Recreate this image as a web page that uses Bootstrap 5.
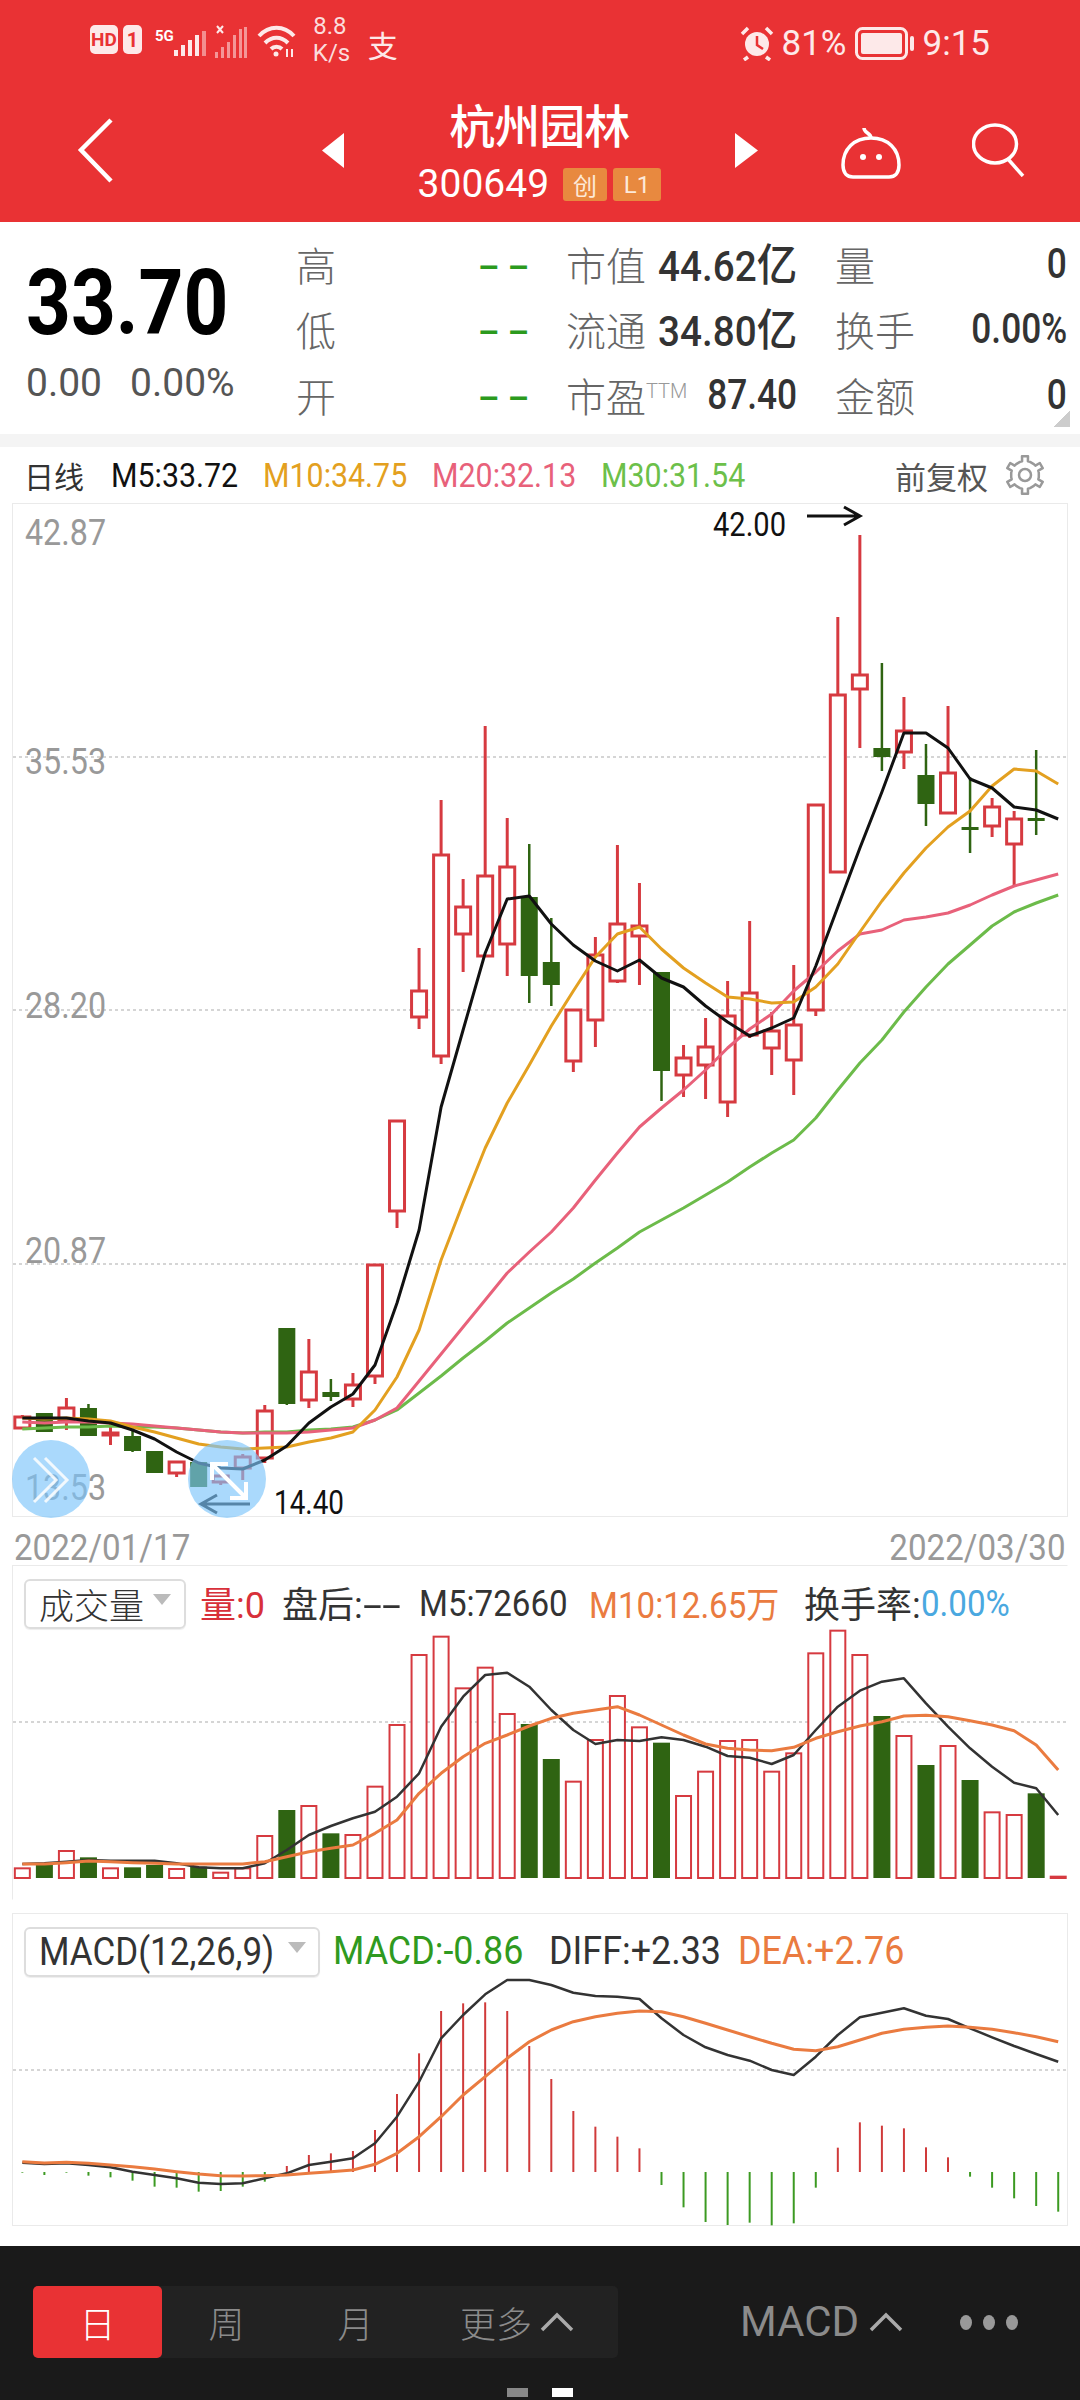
<!DOCTYPE html>
<html lang="zh">
<head>
<meta charset="UTF-8" />
<title>杭州园林</title>
<link href="https://cdn.jsdelivr.net/npm/bootstrap@5.3.3/dist/css/bootstrap.min.css" rel="stylesheet"/>
<style>
  html, body { margin: 0; background: #fff; }
  body {
    width: 1080px; height: 2400px; overflow: hidden; position: relative;
    font-family: Roboto, "Noto Sans CJK SC", sans-serif;
    color: #333; line-height: 1;
  }
  .cjk { font-family: "Noto Sans CJK SC", sans-serif; }
  /* the app's digits are a condensed face, so squeeze Roboto to match */
  .sq { display: inline-block; white-space: nowrap; transform: scaleX(.92); transform-origin: left center; }
  .sq-r { transform-origin: right center; }

  .top-red { background: #e93234; height: 222px; color: #fff; }
  .status-row { height: 84px; padding: 21px 90px 0 90px; }
  .st-hd { width: 28px; height: 29px; background: #fde9e9; color: #e93234; border-radius: 5px; font-size: 19px; font-weight: 700; }
  .st-one { width: 19px; height: 29px; background: #fde9e9; color: #e93234; border-radius: 5px; font-size: 20px; font-weight: 700; margin-left: 5px; }
  .st-5g { font-size: 15px; font-weight: 700; margin: -17px 0 0 13px; }
  .st-speed { font-size: 24px; line-height: 27px; width: 34px; margin: -8px 0 0 16px; text-align: center; color: #fbdcdc; }
  .st-pay { font-size: 30px; margin: -2px 0 0 21px; color: #fde9e9; }
  .st-txt { font-size: 35px; color: #fde9e9; }
  .tool-row { height: 138px; padding: 0 54px 0 77px; position: relative; }
  .title-box { width: 250px; }
  .stock-name { font-size: 46px; font-weight: 500; letter-spacing: -1px; margin-top: 16px; }
  .stock-code { font-size: 39px; margin-top: 19px; gap: 6px; }
  .tag-box { background: #e8893f; color: #fde9d8; border-radius: 3px; height: 33px; font-size: 24px; }
  .tag-a { width: 44px; }
  .tag-b { width: 48px; }
  .nav-back { margin-top: 33px; }
  .nav-prev { margin: 49px 0 0 205px; }
  .nav-next { margin: 49px 82px 0 0; }
  .nav-bot { margin-top: 41px; }
  .nav-find { margin-top: 39px; }

  .quote-box { height: 212px; }
  .price-col { width: 296px; padding: 46px 0 0 26px; }
  .big-price { font-size: 91px; font-weight: 700; color: #000; height: 70px; line-height: 70px; transform: scaleX(.86); }
  .sub-price { font-size: 39px; color: #555; margin-top: 26px; gap: 28px; }
  .quote-grid { display: grid; grid-template-columns: 181px 89px 231px 38px 232px; grid-auto-rows: 65.5px; padding-top: 9px; font-size: 40px; align-items: center; }
  .q-lab { color: #666; font-family: "Noto Sans CJK SC", sans-serif; font-weight: 300; white-space: nowrap; }
  .q-dash { color: #2b9a1d; font-weight: 700; letter-spacing: 3px; font-size: 32px; display: inline-block; transform: scaleX(1.9); transform-origin: left center; }
  .q-val { color: #333; font-size: 42px; font-weight: 500; transform: scaleX(.84); margin-left: -50px; }
  .q-wide { transform: scaleX(.92); }
  .q-val .cjk { font-size: 44px; }
  .q-ttm { font-size: 20px; color: #999; vertical-align: 14px; font-family: Roboto, sans-serif; font-weight: 300; }
  .fold-mark { position: absolute; left: 1053px; top: 410px; width: 17px; height: 17px; background: linear-gradient(135deg, transparent 50%, #ccc 50%); }
  .grey-gap { height: 13px; background: #f4f4f4; }

  .ma-row { height: 56px; padding: 0 35px 0 24px; font-size: 33px; }
  .ma-day { font-size: 30px; width: 87px; }
  .c-ma5 { color: #111; width: 152px; }
  .c-ma10 { color: #e3a020; width: 169px; }
  .c-ma20 { color: #e8617a; width: 169px; }
  .c-ma30 { color: #6cc04a; }
  .fq-txt { color: #555; font-size: 31px; margin-right: 17px; }

  .plot-box { margin-left: 12px; width: 1056px; border: 1px solid #eaeaea; background: #fff; }
  .plot-box svg { display: block; overflow: visible; }
  .plot-main { height: 1014px; }
  .date-row { height: 48px; padding: 13px 14px 0 14px; color: #999; font-size: 36px; }
  .plot-vol { height: 335px; border-bottom-color: #fff; border-right-color: #fff; }
  .plot-macd { height: 313px; }
  .plot-spacer { height: 13px; }
  .legend-row { height: 64px; padding: 11px 0 0 11px; font-size: 36px; }
  .legend-macd { font-size: 39px; }
  .sel-box { border: 2px solid #ddd; border-radius: 6px; height: 50px; padding-left: 13px; color: #333; box-shadow: 0 1px 1px #eee; }
  .sel-vol { width: 162px; font-size: 35px; margin-right: 14px; }
  .sel-macd { width: 296px; font-size: 38px; margin-right: 13px; }
  .sel-caret { width: 0; height: 0; border: 9px solid transparent; border-top: 11px solid #bbb; border-bottom: 0; margin-left: 9px; margin-top: -8px; }
  .sel-macd .sel-caret { margin-left: -7px; }
  .c-red { color: #d8303a; }
  .c-org { color: #ea7b40; }
  .c-blue { color: #4aa8e0; }
  .c-grn { color: #2f9a20; }
  .dash-wide { display: inline-block; transform: scaleX(1.9); transform-origin: left center; }
  .w-82 { width: 82px; }
  .w-137 { width: 137px; }
  .w-170 { width: 170px; }
  .w-215 { width: 215px; }
  .w-216 { width: 216px; }
  .w-189 { width: 189px; }

  .gap-white { height: 20px; }
  .bottom-dark { background: #1a1a1a; height: 154px; padding: 40px 0 0 33px; position: relative; color: #8b8b8b; }
  .seg-bar { width: 585px; height: 72px; background: #222; border-radius: 5px; font-size: 36px; font-weight: 300; }
  .seg-item { width: 129px; }
  .seg-on { background: #e93234; color: #fff; border-radius: 5px; }
  .seg-more { padding-left: 40px; }
  .macd-pick { font-size: 42px; margin-left: 122px; gap: 10px; height: 72px; }
  .dot-row { margin-left: 57px; gap: 11px; height: 72px; }
  .dot-one { width: 12px; height: 15px; border-radius: 50%; background: #999; }
  .pager { position: absolute; left: 507px; top: 142px; gap: 24px; }
  .pager i { display: block; width: 21px; height: 9px; background: #888; }
  .pager i + i { background: #fff; }

  .float-btn { position: absolute; top: 1440px; width: 78px; height: 78px; border-radius: 50%; background: rgba(125, 197, 250, .65); }
  .float-a { left: 12px; }
  .float-b { left: 188px; }
</style>
</head>
<body>

<div class="top-red">
  <div class="status-row d-flex align-items-start">
    <div class="st-hd d-flex align-items-center justify-content-center mt-1">HD</div>
    <div class="st-one d-flex align-items-center justify-content-center mt-1">1</div>
    <div class="st-5g mt-1 pt-1">5G</div>
    <svg width="33" height="30" class="mt-2" fill="#fde9e9"><rect x="0" y="21" width="4" height="6"/><rect x="7" y="16" width="4" height="11"/><rect x="14" y="11" width="4" height="16"/><rect x="21" y="6" width="4" height="21"/><rect x="28" y="2" width="4" height="25" opacity=".5"/></svg>
    <svg width="34" height="36" class="ms-2 mt-1" fill="#fde9e9"><path d="M2 1l6 7M8 1L2 8" stroke="#fde9e9" stroke-width="2"/><g opacity=".55"><rect x="0" y="27" width="3" height="6"/><rect x="6" y="22" width="3" height="11"/><rect x="12" y="17" width="3" height="16"/><rect x="18" y="10" width="3" height="23"/><rect x="24" y="4" width="3" height="29"/><rect x="29" y="2" width="3" height="31"/></g></svg>
    <svg width="40" height="34" class="ms-2 mt-1" fill="none" stroke="#fde9e9" stroke-width="4"><path d="M2 11C12 0 27 0 37 11M8 18c7-7 16-7 23 0M14 24c3-3 8-3 11 0"/><circle cx="19" cy="29" r="2.5" fill="#fde9e9" stroke="none"/><path d="M30 24v8M35 24v8" stroke-width="2"/></svg>
    <div class="st-speed">8.8 K/s</div>
    <div class="st-pay cjk mt-2">支</div>
    <div class="ms-auto d-flex align-items-center mt-1">
      <svg width="34" height="36" fill="none" stroke="#fde9e9"><circle cx="17" cy="19" r="12" fill="#fde9e9" stroke="none"/><path d="M17 11v9l6 4" stroke="#e93234" stroke-width="2.5"/><path d="M2 9l6-6M32 9l-6-6M8 32l-4 3M26 32l4 3" stroke-width="3.5"/></svg>
      <span class="st-txt ms-2">81%</span>
      <svg width="60" height="33" class="ms-2"><rect x="1.5" y="1.5" width="50" height="30" rx="6" fill="none" stroke="#fde9e9" stroke-width="3"/><rect x="6" y="6" width="41" height="21" rx="2" fill="#fde9e9"/><rect x="55" y="9" width="4" height="15" rx="2" fill="#fde9e9"/></svg>
      <span class="st-txt ms-2">9:15</span>
    </div>
  </div>
  <div class="tool-row d-flex align-items-start">
    <svg width="40" height="66" class="nav-back" fill="none" stroke="#fff" stroke-width="4.5"><path d="M34 3L4 33l30 31" stroke-linejoin="miter"/></svg>
    <svg width="22" height="35" class="nav-prev" fill="#fff"><path d="M22 0v35L0 17.500z"/></svg>
    <div class="title-box mx-auto text-center d-flex flex-column align-items-center">
      <div class="stock-name cjk">杭州园林</div>
      <div class="stock-code d-flex align-items-center">300649<span class="tag-box tag-a cjk d-flex align-items-center justify-content-center ms-2">创</span><span class="tag-box tag-b d-flex align-items-center justify-content-center">L1</span></div>
    </div>
    <svg width="23" height="35" class="nav-next" fill="#fff"><path d="M0 0v35L23 17.500z"/></svg>
    <svg width="62" height="56" class="nav-bot" fill="none" stroke="#fff" stroke-width="3.500"><path d="M31 13C31 8 24 8 24 3"/><path d="M3 40C3 24 14 13 31 13s28 11 28 27c0 8-4 12-10 12H13C7 52 3 48 3 40z"/><circle cx="23" cy="32" r="3" fill="#fff" stroke="none"/><circle cx="39" cy="32" r="3" fill="#fff" stroke="none"/></svg>
    <svg width="54" height="54" class="nav-find ms-auto" fill="none" stroke="#fff" stroke-width="3.500"><ellipse cx="23" cy="21" rx="21.500" ry="19"/><path d="M36 36l15 17"/></svg>
  </div>
</div>

<div class="quote-box d-flex">
  <div class="price-col">
    <div class="big-price sq">33.70</div>
    <div class="sub-price d-flex"><span>0.00</span><span>0.00%</span></div>
  </div>
  <div class="quote-grid">
    <div class="q-lab">高</div><div><span class="q-dash">--</span></div>
    <div class="d-flex justify-content-between align-items-center"><span class="q-lab">市值</span><span class="q-val q-wide sq sq-r">44.62<span class="cjk">亿</span></span></div><div></div>
    <div class="d-flex justify-content-between align-items-center"><span class="q-lab">量</span><span class="q-val sq sq-r">0</span></div>
    <div class="q-lab">低</div><div><span class="q-dash">--</span></div>
    <div class="d-flex justify-content-between align-items-center"><span class="q-lab">流通</span><span class="q-val q-wide sq sq-r">34.80<span class="cjk">亿</span></span></div><div></div>
    <div class="d-flex justify-content-between align-items-center"><span class="q-lab">换手</span><span class="q-val sq sq-r">0.00%</span></div>
    <div class="q-lab">开</div><div><span class="q-dash">--</span></div>
    <div class="d-flex justify-content-between align-items-center"><span class="q-lab">市盈<span class="q-ttm">TTM</span></span><span class="q-val sq sq-r">87.40</span></div><div></div>
    <div class="d-flex justify-content-between align-items-center"><span class="q-lab">金额</span><span class="q-val sq sq-r">0</span></div>
  </div>
</div>
<div class="fold-mark"></div>
<div class="grey-gap"></div>

<div class="ma-row d-flex align-items-center">
  <span class="cjk ma-day">日线</span>
  <span class="c-ma5"><span class="sq">M5:33.72</span></span>
  <span class="c-ma10"><span class="sq">M10:34.75</span></span>
  <span class="c-ma20"><span class="sq">M20:32.13</span></span>
  <span class="c-ma30"><span class="sq">M30:31.54</span></span>
  <span class="fq-txt cjk ms-auto">前复权</span>
  <svg width="40" height="40" id="gearIcon"></svg>
</div>

<div class="plot-box plot-main"><svg id="mainChart" width="1054" height="1012" viewBox="13 504 1054 1012"></svg></div>
<div class="date-row d-flex justify-content-between"><span class="sq">2022/01/17</span><span class="sq sq-r">2022/03/30</span></div>

<div class="plot-box plot-vol">
  <div class="legend-row d-flex align-items-center">
    <div class="sel-box sel-vol d-flex align-items-center"><span class="cjk fw-light">成交量</span><span class="sel-caret"></span></div>
    <span class="c-red w-82"><span class="cjk">量</span>:0</span>
    <span class="w-137"><span class="cjk">盘后</span>:<span class="dash-wide">--</span></span>
    <span class="w-170"><span class="sq">M5:72660</span></span>
    <span class="c-org w-215"><span class="sq">M10:12.65<span class="cjk">万</span></span></span>
    <span><span class="cjk">换手率</span>:</span><span class="c-blue sq">0.00%</span>
  </div>
  <svg id="volChart" width="1054" height="270" viewBox="13 1630 1054 270"></svg>
</div>

<div class="plot-spacer"></div>

<div class="plot-box plot-macd">
  <div class="legend-row legend-macd d-flex align-items-center">
    <div class="sel-box sel-macd d-flex align-items-center"><span class="sq">MACD(12,26,9)</span><span class="sel-caret"></span></div>
    <span class="c-grn w-216"><span class="sq">MACD:-0.86</span></span>
    <span class="w-189"><span class="sq">DIFF:+2.33</span></span>
    <span class="c-org"><span class="sq">DEA:+2.76</span></span>
  </div>
  <svg id="macdChart" width="1054" height="247" viewBox="13 1978 1054 247"></svg>
</div>

<div class="gap-white"></div>

<div class="bottom-dark d-flex align-items-start">
  <div class="seg-bar d-flex align-items-center cjk">
    <div class="seg-item seg-on h-100 d-flex align-items-center justify-content-center">日</div>
    <div class="seg-item text-center">周</div>
    <div class="seg-item text-center">月</div>
    <div class="seg-item seg-more d-flex align-items-center gap-2 text-nowrap">更多<svg width="34" height="20" fill="none" stroke="#aaa" stroke-width="3.500" class="flex-shrink-0"><path d="M2 18L17 3l15 15"/></svg></div>
  </div>
  <div class="macd-pick d-flex align-items-center">MACD<svg width="34" height="20" fill="none" stroke="#aaa" stroke-width="3.500"><path d="M2 18L17 3l15 15"/></svg></div>
  <div class="dot-row d-flex align-items-center"><span class="dot-one"></span><span class="dot-one"></span><span class="dot-one"></span></div>
  <div class="pager d-flex"><i></i><i></i></div>
</div>

<div class="float-btn float-a"><svg width="78" height="78" fill="none" stroke="#fff" stroke-width="3" opacity=".85"><path d="M22 18l22 22-22 22M33 18l22 22-22 22"/></svg></div>
<div class="float-btn float-b"><svg width="78" height="78" fill="none" stroke="#fff" stroke-width="4"><path d="M24 40V24h16M26 26l30 30M58 42v16H42"/></svg></div>

<script>
  const UP = '#d63a40', DOWN = '#2f6412';
  const xAt = i => 22.04 * (i + 1) + 0.3;
  const ns = 'http://www.w3.org/2000/svg';

  function add(svg, tag, attrs, text) {
    const el = document.createElementNS(ns, tag);
    for (const k in attrs) el.setAttribute(k, attrs[k]);
    if (text) el.textContent = text;
    svg.appendChild(el);
  }
  function line(svg, pts, color, w) {
    add(svg, 'polyline', { points: pts.map((y, i) => xAt(i).toFixed(1) + ',' + y.toFixed(1)).join(' '), fill: 'none', stroke: color, 'stroke-width': w, 'stroke-linejoin': 'round' });
  }
  function dotted(svg, y) {
    add(svg, 'line', { x1: 13, x2: 1067, y1: y, y2: y, stroke: '#d5d5d5', 'stroke-width': 2, 'stroke-dasharray': '3 3' });
  }

  // [colour, wick top, body top, body bottom, wick bottom]
  const candles = [
    ['r',1415,1417,1428,1429],['g',1413,1413,1432,1432],['r',1398,1408,1420,1430],['g',1404,1408,1436,1436],
    ['r',1423,1433,1435,1445],['g',1430,1436,1451,1452],['g',1451,1451,1473,1473],['r',1462,1462,1473,1477],
    ['g',1462,1462,1487,1487],['r',1472,1476,1482,1485],['r',1454,1457,1468,1480],['r',1405,1411,1458,1463],
    ['g',1328,1328,1404,1405],['r',1339,1372,1400,1408],['g',1379,1392,1397,1401],['r',1373,1385,1399,1407],
    ['r',1265,1265,1376,1384],['r',1121,1121,1211,1228],['r',948,991,1017,1029],['r',800,855,1056,1064],
    ['r',879,907,934,972],['r',726,876,956,957],['r',818,867,944,976],['g',844,897,976,1003],
    ['g',918,962,985,1006],['r',1010,1010,1061,1072],['r',937,955,1020,1047],['r',845,924,981,983],
    ['r',883,926,936,985],['g',972,972,1071,1101],['r',1045,1058,1075,1097],['r',1018,1047,1065,1099],
    ['r',981,1016,1102,1117],['r',921,993,1035,1038],['r',1012,1031,1048,1075],['r',965,1025,1060,1095],
    ['r',805,805,1010,1016],['r',617,695,872,872],['r',535,675,689,748],['g',663,748,757,771],
    ['r',697,731,752,769],['g',744,775,804,826],['r',706,773,813,813],['g',777,827,829,853],
    ['r',798,807,826,837],['r',811,819,844,886],['g',750,818,819,835]
  ];
  const ma5 = [1418,1418,1418,1421,1423,1430,1439,1452,1463,1468,1469,1460,1446,1423,1407,1394,1365,1303,1230,1107,1030,953,899,896,924,945,961,971,960,978,987,1006,1022,1036,1028,1018,966,907,848,792,733,733,748,779,788,807,810,819];
  const ma10 = [1418,1419,1418,1419,1421,1427,1432,1438,1444,1447,1449,1448,1447,1442,1438,1432,1410,1377,1330,1260,1203,1148,1103,1065,1026,991,957,934,927,949,968,983,997,999,1003,1002,987,964,932,901,873,848,827,811,786,769,771,784];
  const ma20 = [1422,1423,1422,1422,1423,1424,1426,1428,1430,1432,1433,1433,1433,1432,1430,1428,1420,1408,1381,1354,1327,1300,1273,1252,1232,1208,1180,1153,1127,1108,1090,1070,1048,1029,1014,991,972,951,934,930,920,917,913,905,895,886,880,874];
  const ma30 = [1429,1428,1427,1427,1426,1427,1427,1428,1430,1432,1433,1432,1432,1430,1429,1427,1420,1410,1393,1376,1358,1341,1323,1308,1293,1279,1263,1248,1232,1220,1208,1195,1182,1167,1153,1140,1118,1090,1063,1040,1012,987,964,945,926,912,903,895];

  const mainSvg = document.getElementById('mainChart');
  [757, 1010, 1264].forEach(y => dotted(mainSvg, y));
  candles.forEach((c, i) => {
    const x = xAt(i), col = c[0] === 'r' ? UP : DOWN;
    add(mainSvg, 'line', { x1: x, x2: x, y1: c[1], y2: c[2], stroke: col, 'stroke-width': c[0] === 'r' ? 3 : 2.5 });
    add(mainSvg, 'line', { x1: x, x2: x, y1: c[3], y2: c[4], stroke: col, 'stroke-width': c[0] === 'r' ? 3 : 2.5 });
    if (c[0] === 'r') add(mainSvg, 'rect', { x: x - 7.5, y: c[2], width: 15, height: Math.max(c[3] - c[2], 2), fill: '#fff', stroke: col, 'stroke-width': 3 });
    else add(mainSvg, 'rect', { x: x - 8.5, y: c[2], width: 17, height: Math.max(c[3] - c[2], 3), fill: col });
  });
  line(mainSvg, ma30, '#6cbb4a', 3);
  line(mainSvg, ma20, '#e8617a', 3);
  line(mainSvg, ma10, '#e3a020', 3);
  line(mainSvg, ma5, '#111', 3);
  [['42.87', 545], ['35.53', 774], ['28.20', 1018], ['20.87', 1263], ['13.53', 1500]].forEach(t => {
    add(mainSvg, 'text', { x: 25, y: t[1], fill: '#999', 'font-size': 36, textLength: 81, lengthAdjust: 'spacingAndGlyphs' }, t[0]);
  });
  add(mainSvg, 'text', { x: 713, y: 536, fill: '#111', 'font-size': 34, textLength: 73, lengthAdjust: 'spacingAndGlyphs' }, '42.00');
  add(mainSvg, 'path', { d: 'M807 516h52M844 507l16 9-16 9', fill: 'none', stroke: '#111', 'stroke-width': 3 });
  add(mainSvg, 'text', { x: 274, y: 1514, fill: '#111', 'font-size': 34, textLength: 70, lengthAdjust: 'spacingAndGlyphs' }, '14.40');
  add(mainSvg, 'path', { d: 'M250 1504h-48M217 1495l-16 9 16 9', fill: 'none', stroke: '#111', 'stroke-width': 3 });

  // values below are read off the reference at 3x, so y = top + v / 3
  const volTops = [985,975,933,952,985,982,975,987,980,998,985,888,810,798,880,885,740,555,345,290,445,383,522,552,657,725,600,468,562,608,768,695,603,600,695,640,340,272,345,528,588,675,618,720,817,825,760,1010];
  const volDown = [1,3,5,6,8,12,14,23,24,29,39,41,43,46];
  const volM5 = [972,970,965,960,962,962,962,970,982,985,985,970,930,885,858,835,815,770,700,560,470,405,398,440,510,570,612,600,603,592,600,620,648,653,672,645,570,500,452,425,415,490,560,625,680,728,745,825];
  const volM10 = [972,972,968,963,965,968,970,972,972,972,972,965,950,935,925,915,880,840,760,700,650,610,585,558,535,520,510,500,525,555,585,612,625,630,632,622,595,575,558,545,528,526,530,542,555,572,615,690];
  const volY = v => 1540 + v / 3;

  const volSvg = document.getElementById('volChart');
  dotted(volSvg, 1722);
  volTops.forEach((v, i) => {
    const x = xAt(i), top = volY(v), h = 1878 - top;
    if (volDown.includes(i)) add(volSvg, 'rect', { x: x - 8.5, y: top, width: 17, height: h, fill: DOWN });
    else add(volSvg, 'rect', { x: x - 7.5, y: top, width: 15, height: h, fill: '#fff', stroke: UP, 'stroke-width': 2 });
  });
  line(volSvg, volM5.map(volY), '#333', 2.5);
  line(volSvg, volM10.map(volY), '#ea7b40', 3);

  const macdBars = [818,825,818,827,832,842,860,863,875,873,860,845,798,765,760,753,690,582,460,333,310,307,333,438,537,633,680,710,745,855,922,966,975,968,976,970,863,743,667,677,685,742,772,830,863,895,918,935];
  const diff = [788,792,790,795,802,815,825,835,848,852,850,835,820,795,785,775,730,650,545,415,345,283,240,240,255,278,288,290,297,355,405,442,465,482,510,525,470,405,352,338,325,347,357,385,412,438,462,485];
  const dea = [785,789,787,790,795,800,807,815,822,827,828,827,825,820,815,810,793,760,710,650,585,530,475,425,390,365,350,340,333,335,350,370,390,410,430,448,452,440,420,400,388,382,378,382,388,398,410,425];
  const macdY = v => 1900 + v / 3;

  const macdSvg = document.getElementById('macdChart');
  dotted(macdSvg, 2070);
  macdBars.forEach((v, i) => {
    const x = xAt(i);
    add(macdSvg, 'line', { x1: x, x2: x, y1: 2172, y2: macdY(v), stroke: v > 815 ? '#3c9a22' : '#d03a3a', 'stroke-width': 2 });
  });
  line(macdSvg, diff.map(macdY), '#333', 2.5);
  line(macdSvg, dea.map(macdY), '#ea7b40', 3);

  // settings gear
  const gear = document.getElementById('gearIcon');
  let d = '';
  for (let a = 0; a < 360; a += 60) {
    [[-21, 14], [-12, 14], [-9, 19], [9, 19], [12, 14], [21, 14]].forEach((p, n) => {
      const r = (a + p[0] - 30) * Math.PI / 180;
      d += (a === 0 && n === 0 ? 'M' : 'L') + (20 + p[1] * Math.cos(r)).toFixed(1) + ' ' + (20 + p[1] * Math.sin(r)).toFixed(1);
    });
  }
  add(gear, 'path', { d: d + 'Z', fill: 'none', stroke: '#999', 'stroke-width': 2.5, 'stroke-linejoin': 'round' });
  add(gear, 'circle', { cx: 20, cy: 20, r: 6, fill: 'none', stroke: '#999', 'stroke-width': 2.5 });
</script>
<script src="https://cdn.jsdelivr.net/npm/bootstrap@5.3.3/dist/js/bootstrap.bundle.min.js"></script>
</body>
</html>
